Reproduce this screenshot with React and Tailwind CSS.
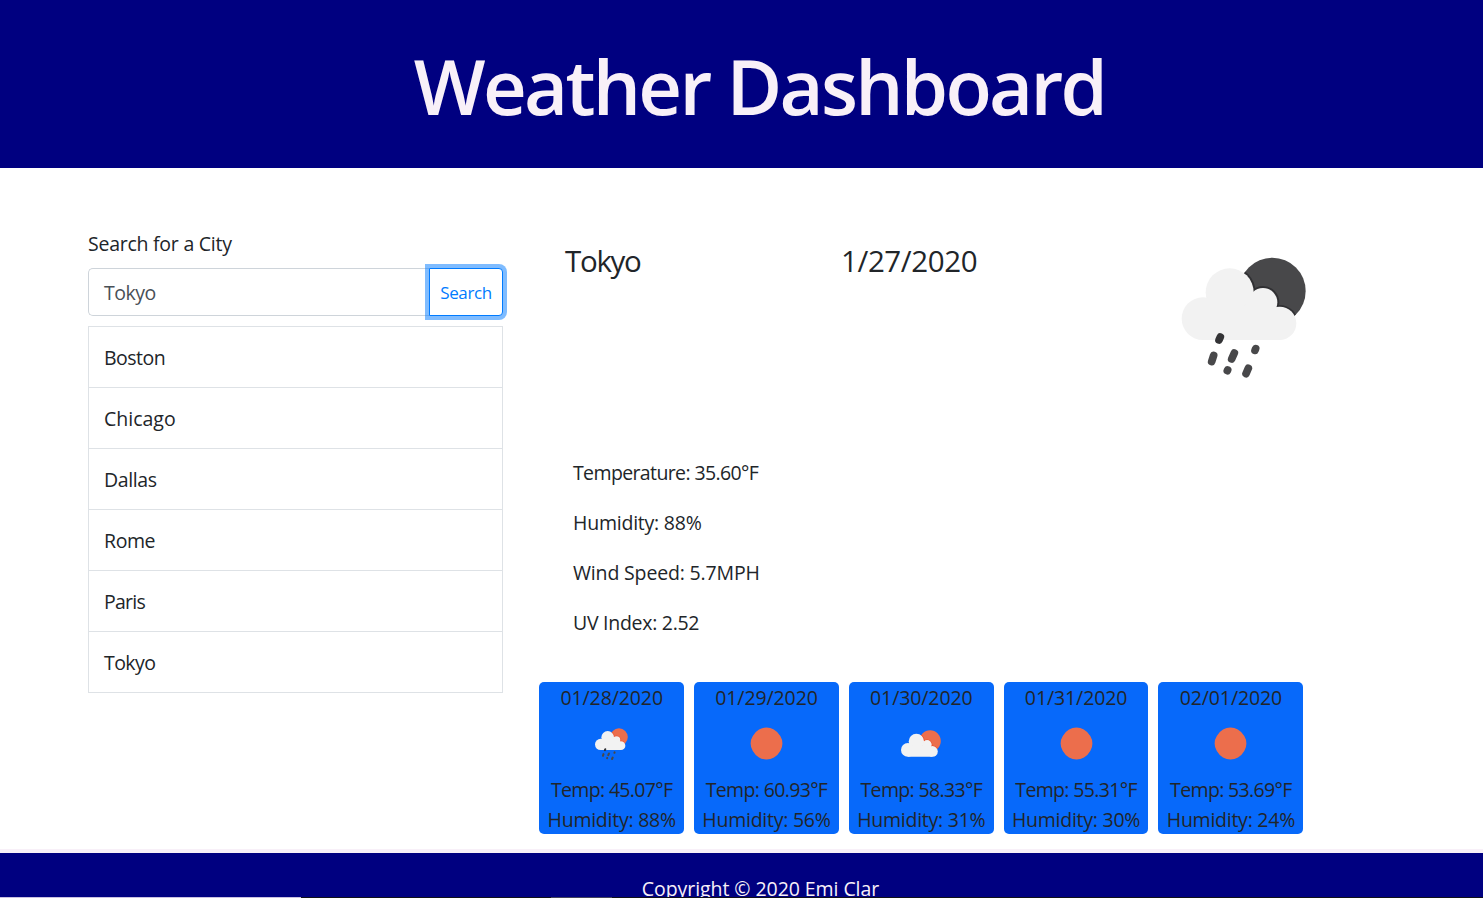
import { useId } from "react";

const cities = [
  { name: "Boston", spacing: "tracking-[-0.5px]" },
  { name: "Chicago", spacing: "tracking-[0px]" },
  { name: "Dallas", spacing: "tracking-[-0.4px]" },
  { name: "Rome", spacing: "tracking-[-0.4px]" },
  { name: "Paris", spacing: "tracking-[-0.75px]" },
  { name: "Tokyo", spacing: "tracking-[-0.55px]" },
];

const conditions = [
  { text: "Temperature: 35.60°F", spacing: "tracking-[-0.62px]" },
  { text: "Humidity: 88%", spacing: "tracking-[-0.22px]" },
  { text: "Wind Speed: 5.7MPH", spacing: "tracking-[-0.16px]" },
  { text: "UV Index: 2.52", spacing: "tracking-[-0.28px]" },
];

const forecast = [
  { date: "01/28/2020", icon: "rain", temp: "45.07", humidity: "88" },
  { date: "01/29/2020", icon: "sun", temp: "60.93", humidity: "56" },
  { date: "01/30/2020", icon: "cloud", temp: "58.33", humidity: "31" },
  { date: "01/31/2020", icon: "sun", temp: "55.31", humidity: "30" },
  { date: "02/01/2020", icon: "sun", temp: "53.69", humidity: "24" },
];

function CloudShapes({ disc, edge }) {
  const clip = useId();
  return (
    <>
      <clipPath id={clip}>
        <circle cx="272" cy="103" r="100" />
      </clipPath>
      <circle cx="272" cy="103" r="100" fill={disc} />
      <g fill={edge} clipPath={`url(#${clip})`}>
        <circle cx="144" cy="107" r="78" />
        <circle cx="244" cy="137" r="49" />
        <circle cx="294" cy="200" r="55" />
      </g>
      <g fill="#f2f2f2">
        <circle cx="144" cy="107" r="72" />
        <circle cx="244" cy="137" r="43" />
        <circle cx="294" cy="200" r="50" />
        <circle cx="64" cy="186" r="64" />
        <path d="M64 150H170L244 130L294 190V250H64Z" />
      </g>
    </>
  );
}

function Drops() {
  return (
    <g stroke="#48484a" strokeWidth="23" strokeLinecap="round">
      <path d="M116 241l-4 9" stroke="#333335" />
      <path d="M96 296l-6 19" />
      <path d="M158 289l-8 18" />
      <path d="M222 276l-2 5" />
      <path d="M138 340l-1 2" />
      <path d="M200 335l-7 16" />
    </g>
  );
}

function WeatherIcon({ icon }) {
  if (icon === "sun") {
    return (
      <svg width="33" height="33" viewBox="0 0 33 33">
        <path
          d="M16.5.6Q20.5.6 23.8 2.6 28 5 30.3 9 32.5 12.7 32.4 16.5 32.5 20.5 30.3 24 28 28.1 24 30.4 20.5 32.4 16.5 32.4 12.5 32.4 9 30.4 5 28 2.8 24 .6 20.5.6 16.5.6 12.5 2.8 9 5 5 9 2.6 12.5.6 16.5.6Z"
          fill="#ec6e4c"
        />
      </svg>
    );
  }
  if (icon === "cloud") {
    return (
      <svg width="40" height="27" viewBox="0 0 374 252">
        <CloudShapes disc="#ec6e4c" edge="#ea4a26" />
      </svg>
    );
  }
  return (
    <svg width="33" height="32" viewBox="0 0 374 362">
      <CloudShapes disc="#ec6e4c" edge="#ea4a26" />
      <Drops />
    </svg>
  );
}

export default function App() {
  return (
    <div className="flex h-[898px] flex-col overflow-hidden bg-white font-['Open_Sans',sans-serif] text-[19.5px] leading-[30px] text-[#212529]">
      <header className="flex h-[168px] shrink-0 items-center justify-center bg-[#000080] pl-[36px] pt-[3px]">
        <h1 className="text-[76px] font-semibold leading-[100px] tracking-[-2.7px] text-[#f8f0f8]">
          Weather Dashboard
        </h1>
      </header>

      <main className="flex h-[681px] shrink-0 pl-[88px]">
        <section className="w-[415px] pt-[61px]">
          <label className="block tracking-[-0.25px]">Search for a City</label>
          <div className="mt-[9px] flex h-12">
            <div className="flex flex-1 items-center rounded-l-[5px] border border-r-0 border-[#ced4da] pl-[15px] pt-[2px] tracking-[-0.5px] text-[#495057]">
              Tokyo
            </div>
            <button className="w-[74px] rounded-r-[4px] border border-[#007bff] bg-white pt-[2px] text-[17px] tracking-[-0.4px] text-[#007bff] ring-4 ring-[#007bff]/50">
              Search
            </button>
          </div>
          <ul className="mt-[10px] border border-b-0 border-[#dee2e6]">
            {cities.map((city) => (
              <li
                key={city.name}
                className={`flex h-[61px] items-center border-b border-[#dee2e6] pl-[15px] pt-[2px] ${city.spacing}`}
              >
                {city.name}
              </li>
            ))}
          </ul>
        </section>

        <section className="ml-[36px] w-[820px] pt-[74px]">
          <div className="flex h-[216px] pl-[26px] text-[29.5px] leading-[38px]">
            <h2 className="w-[276px] tracking-[-1.3px]">Tokyo</h2>
            <h2 className="w-[340px] tracking-[-0.4px]">1/27/2020</h2>
            <svg className="mt-[14px]" width="126" height="122" viewBox="-2 -2 378 366">
              <CloudShapes disc="#48484a" edge="#303033" />
              <Drops />
            </svg>
          </div>
          <div className="flex flex-col gap-5 pl-[34px]">
            {conditions.map((item) => (
              <p key={item.text} className={item.spacing}>
                {item.text}
              </p>
            ))}
          </div>
          <div className="ml-[0.3px] mt-[44px] grid w-[764px] grid-cols-5 gap-[10px] text-center">
            {forecast.map((day) => (
              <article key={day.date} className="h-[152px] whitespace-nowrap rounded-[5px] bg-[#0769fa] pt-px">
                <p className="h-[29px] tracking-[-0.1px]">{day.date}</p>
                <div className="flex h-[63px] items-center justify-center">
                  <WeatherIcon icon={day.icon} />
                </div>
                <p className="tracking-[-0.65px]">Temp: {day.temp}°F</p>
                <p className="tracking-[-0.25px]">Humidity: {day.humidity}%</p>
              </article>
            ))}
          </div>
        </section>
      </main>

      <footer className="flex h-[48px] shrink-0 justify-center overflow-hidden border-t-4 border-[#f8f0f8] bg-[#000080] pl-[38px] pt-[21px] text-[#f8f0f8]">
        <p className="whitespace-nowrap tracking-[-0.07px]">Copyright © 2020 Emi Clar</p>
      </footer>
      <div className="flex h-px shrink-0 bg-[#101018]">
        <div className="w-[301px] bg-[#c8c0e0]" />
        <div className="ml-[250px] w-[61px] bg-[#44445c]" />
      </div>
    </div>
  );
}
